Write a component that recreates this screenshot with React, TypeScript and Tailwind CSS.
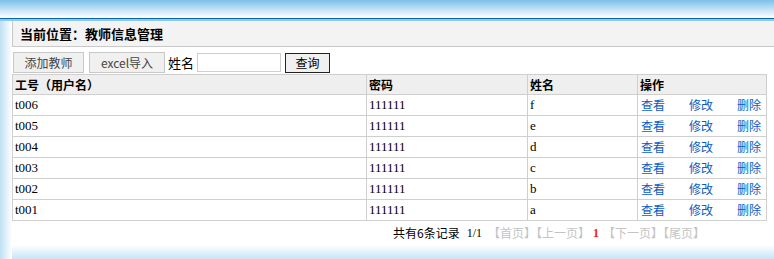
import React from "react";

const rows = [
  { id: "t006", pwd: "111111", name: "f" },
  { id: "t005", pwd: "111111", name: "e" },
  { id: "t004", pwd: "111111", name: "d" },
  { id: "t003", pwd: "111111", name: "c" },
  { id: "t002", pwd: "111111", name: "b" },
  { id: "t001", pwd: "111111", name: "a" },
];

const cjk = "font-['SimSun','Noto_Sans_CJK_SC',sans-serif]";
const serif = "font-['Liberation_Serif','Noto_Sans_CJK_SC',serif]";
const cell = "border border-[#cfcfcf] pl-[2px] py-0 leading-[16px]";

export default function App() {
  return (
    <div className="w-[774px] h-[259px] overflow-hidden bg-white flex text-black">
      <div className="w-[12px] flex flex-col">
        <div className="h-[18px] bg-gradient-to-b from-[#7bc1ea] to-white" />
        <div className="h-px bg-[#0b68a8]" />
        <div className="h-[2px] bg-[#8fc9ec]" />
        <div className="flex-1 bg-gradient-to-r from-[#bfe0f4] to-white" />
      </div>

      <div className="flex-1 flex flex-col">
        {/* top band */}
        <div className="h-[18px] bg-gradient-to-b from-[#7bc1ea] to-white" />
        <div className="h-px bg-[#0b68a8]" />
        <div className="h-[2px] bg-[#8fc9ec]" />

        {/* location bar */}
        <div className="h-[26px] bg-[#f3f3f3] border-l border-b border-[#c9c9c9] flex items-center pl-[7px]">
          <span className={`${cjk} text-[13px] font-bold`}>当前位置：教师信息管理</span>
        </div>

        {/* toolbar */}
        <div className={`${cjk} mt-[5px] h-[21px] flex items-center text-[13px]`}>
          <button className="h-[21px] w-[71px] ml-px bg-[#f0f0f0] border border-[#c8c8c8] text-[#444] text-[12px]">
            添加教师
          </button>
          <button className="h-[21px] w-[76px] ml-[5px] bg-[#f0f0f0] border border-[#c8c8c8] text-[#444] text-[12px]">
            excel导入
          </button>
          <span className="ml-[3px]">姓名</span>
          <input className="ml-[3px] h-[19px] w-[84px] border border-[#cfcfcf] bg-white outline-none" />
          <button className="ml-[4px] h-[20px] w-[45px] bg-[#f0f0f0] border border-[#222] text-[12px]">
            查询
          </button>
        </div>

        {/* table */}
        <table className="mt-[1px] w-[754px] border-collapse table-fixed">
          <colgroup>
            <col className="w-[354px]" />
            <col className="w-[161px]" />
            <col className="w-[110px]" />
            <col className="w-[129px]" />
          </colgroup>
          <thead>
            <tr className="bg-[#efefef]">
              {["工号（用户名）", "密码", "姓名", "操作"].map((h) => (
                <th key={h} className={`${cjk} ${cell} h-[20px] text-left font-bold text-[12px]`}>
                  {h}
                </th>
              ))}
            </tr>
          </thead>
          <tbody>
            {rows.map((r) => (
              <tr key={r.id}>
                <td className={`${serif} ${cell} h-[21px] text-[13px]`}>{r.id}</td>
                <td className={`${serif} ${cell} h-[21px] text-[13px]`}>{r.pwd}</td>
                <td className={`${serif} ${cell} h-[21px] text-[13px]`}>{r.name}</td>
                <td className={`${cjk} ${cell} h-[21px] text-[12px] pl-[3px]`}>
                  <div className="flex gap-[24px] text-[#0b5cc0]">
                    <a href="#">查看</a>
                    <a href="#">修改</a>
                    <a href="#">删除</a>
                  </div>
                </td>
              </tr>
            ))}
          </tbody>
        </table>

        {/* pagination */}
        <div className={`${cjk} mt-[2px] h-[20px] flex items-center pl-[381px] text-[12px]`}>
          <span>共有6条记录</span>
          <span className={`${serif} ml-[7px]`}>1/1</span>
          <span className="ml-[6px] text-[#c4c4c4]">【首页】【上一页】</span>
          <span className={`${serif} ml-[3px] text-[#ff1a1a] font-bold`}>1</span>
          <span className="ml-[4px] text-[#c4c4c4]">【下一页】【尾页】</span>
        </div>

        <div className="flex-1" />
        {/* bottom band */}
        <div className="h-[14px] bg-gradient-to-b from-white to-[#c6e4f6]" />
      </div>
    </div>
  );
}
